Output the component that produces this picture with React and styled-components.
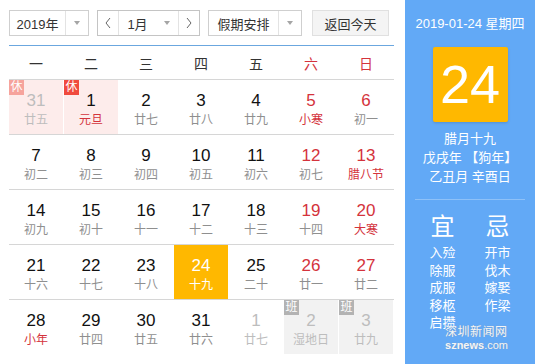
import React from "react"
import styled, { createGlobalStyle } from "styled-components"

const Global = createGlobalStyle`
  body {
    margin: 0;
    background: #fff;
    font-family: "Liberation Sans", Arial, "Noto Sans CJK SC", sans-serif;
  }
`

const Page = styled.div`
  display: flex;
  width: 535px;
  height: 364px;
  overflow: hidden;
`

const Left = styled.div`
  width: 385px;
  padding: 10px 0 0 9px;
`

const Toolbar = styled.div`
  display: flex;
  height: 26px;
  padding-bottom: 9px;
  border-bottom: 1px solid #6ba7df;
`

const Select = styled.div`
  display: flex;
  width: ${p => p.w}px;
  height: 26px;
  box-sizing: border-box;
  border: 1px solid #cfcfcf;
  margin-right: ${p => p.mr || 0}px;
  font-size: 13px;
  color: #333;
`

const SelText = styled.div`
  flex: 1;
  display: flex;
  align-items: center;
  justify-content: center;
`

const Caret = styled.div`
  width: 22px;
  display: flex;
  align-items: center;
  justify-content: center;
  border-left: ${p => (p.noline ? "none" : "1px solid #e3e3e3")};
  &::after {
    content: "";
    border-left: 3px solid transparent;
    border-right: 3px solid transparent;
    border-top: 4px solid #a5a5a5;
  }
`

const Arrow = styled.div`
  width: 20px;
  display: flex;
  align-items: center;
  justify-content: center;
  border-${p => (p.side === "l" ? "right" : "left")}: 1px solid #e3e3e3;
`

const Btn = styled.div`
  width: 77px;
  height: 26px;
  box-sizing: border-box;
  border: 1px solid #e0e0e0;
  background: #f4f4f4;
  font-size: 13px;
  color: #333;
  display: flex;
  align-items: center;
  justify-content: center;
`

const Week = styled.div`
  display: grid;
  grid-template-columns: repeat(7, 54px);
  column-gap: 1px;
  height: 33px;
  align-items: center;
  border-bottom: 1px solid #d6d6d6;
`

const WeekDay = styled.div`
  text-align: center;
  font-size: 14px;
  color: ${p => (p.red ? "#d4333c" : "#333")};
`

const Row = styled.div`
  display: grid;
  grid-template-columns: repeat(7, 54px);
  column-gap: 1px;
  height: 54px;
  border-top: ${p => (p.first ? "none" : "1px solid #d6d6d6")};
`

const bgs = { rest: "#fdeceb", work: "#f2f2f2", today: "#ffb800" }

const Cell = styled.div`
  position: relative;
  background: ${p => bgs[p.kind] || "transparent"};
  display: flex;
  flex-direction: column;
  align-items: center;
  padding-top: 11px;
  box-sizing: border-box;
`

const Num = styled.div`
  font-size: 17px;
  line-height: 20px;
  color: ${p => p.c};
`

const Sub = styled.div`
  font-size: 12px;
  line-height: 16px;
  margin-top: 1px;
  color: ${p => p.c};
`

const badgeColors = { rest: "#f04a3e", restFade: "#f6a39c", work: "#b3b3b3" }

const Badge = styled.span`
  position: absolute;
  left: 0;
  top: 0;
  width: 15px;
  height: 15px;
  line-height: 15px;
  text-align: center;
  font-size: 12px;
  color: #fff;
  background: ${p => badgeColors[p.kind]};
`

const Right = styled.div`
  position: relative;
  margin-left: 11px;
  width: 130px;
  height: 364px;
  background: #62a9f6;
  color: #fff;
  display: flex;
  flex-direction: column;
  align-items: center;
`

const DateLine = styled.div`
  margin-top: 16px;
  font-size: 13px;
  line-height: 16px;
`

const BigDay = styled.div`
  margin-top: 15px;
  width: 75px;
  height: 75px;
  border-radius: 2px;
  background: #ffb800;
  box-shadow: 0 1px 3px rgba(0, 0, 0, 0.15);
  font-size: 54px;
  line-height: 75px;
  text-align: center;
`

const Lunar = styled.div`
  margin-top: 7px;
  font-size: 13px;
  line-height: 19px;
  text-align: center;
`

const Divider = styled.div`
  margin-top: 13px;
  width: 110px;
  height: 1px;
  background: #8ec1f8;
`

const Advice = styled.div`
  display: grid;
  grid-template-columns: 55px 55px;
  margin-top: 13px;
`

const AdvCol = styled.div`
  display: flex;
  flex-direction: column;
  align-items: center;
`

const AdvHead = styled.div`
  font-size: 24px;
  line-height: 28px;
  margin-bottom: 3px;
`

const AdvItem = styled.div`
  font-size: 13px;
  line-height: 17.5px;
`

const Mark = styled.div`
  position: absolute;
  right: 27px;
  bottom: 13px;
  color: rgba(255, 255, 255, 0.92);
  text-shadow: 0 0 1px #8a9bb0;
  text-align: left;
`

const MarkCn = styled.div`
  font-family: "Liberation Serif", "Noto Sans CJK SC", serif;
  font-size: 12px;
  line-height: 13px;
  letter-spacing: 0.5px;
`

const MarkEn = styled.div`
  font-size: 11px;
  line-height: 12px;
  font-weight: bold;
  & span { font-weight: normal; }
`

const Chevron = ({ dir }) => (
  <svg width="8" height="12" viewBox="0 0 8 12">
    <polyline
      points={dir === "l" ? "6,1 2,6 6,11" : "2,1 6,6 2,11"}
      fill="none"
      stroke="#666"
      strokeWidth="1"
    />
  </svg>
)

const RED = "#d4333c"
const BLACK = "#111"
const GRAY = "#8f8f8f"
const FADE = "#bdbdbd"

// n, sub, flags: f=faded, r=red number, sr=red sub, badge, kind
const weeks = [
  [
    { n: 31, s: "廿五", f: 1, kind: "rest", badge: "restFade" },
    { n: 1, s: "元旦", sr: 1, kind: "rest", badge: "rest" },
    { n: 2, s: "廿七" },
    { n: 3, s: "廿八" },
    { n: 4, s: "廿九" },
    { n: 5, s: "小寒", r: 1, sr: 1 },
    { n: 6, s: "初一", r: 1 },
  ],
  [
    { n: 7, s: "初二" },
    { n: 8, s: "初三" },
    { n: 9, s: "初四" },
    { n: 10, s: "初五" },
    { n: 11, s: "初六" },
    { n: 12, s: "初七", r: 1 },
    { n: 13, s: "腊八节", r: 1, sr: 1 },
  ],
  [
    { n: 14, s: "初九" },
    { n: 15, s: "初十" },
    { n: 16, s: "十一" },
    { n: 17, s: "十二" },
    { n: 18, s: "十三" },
    { n: 19, s: "十四", r: 1 },
    { n: 20, s: "大寒", r: 1, sr: 1 },
  ],
  [
    { n: 21, s: "十六" },
    { n: 22, s: "十七" },
    { n: 23, s: "十八" },
    { n: 24, s: "十九", kind: "today" },
    { n: 25, s: "二十" },
    { n: 26, s: "廿一", r: 1 },
    { n: 27, s: "廿二", r: 1 },
  ],
  [
    { n: 28, s: "小年", sr: 1 },
    { n: 29, s: "廿四" },
    { n: 30, s: "廿五" },
    { n: 31, s: "廿六" },
    { n: 1, s: "廿七", f: 1 },
    { n: 2, s: "湿地日", f: 1, kind: "work", badge: "work" },
    { n: 3, s: "廿九", f: 1, kind: "work", badge: "work" },
  ],
]

const yi = ["入殓", "除服", "成服", "移柩", "启攒"]
const ji = ["开市", "伐木", "嫁娶", "作梁"]

function Day({ d }) {
  let nc = d.r ? RED : BLACK
  let sc = d.sr ? RED : GRAY
  if (d.f) {
    nc = FADE
    sc = FADE
  }
  if (d.kind === "today") {
    nc = "#fff"
    sc = "#fff"
  }
  return (
    <Cell kind={d.kind}>
      {d.badge && <Badge kind={d.badge}>{d.badge === "work" ? "班" : "休"}</Badge>}
      <Num c={nc}>{d.n}</Num>
      <Sub c={sc}>{d.s}</Sub>
    </Cell>
  )
}

export default function App() {
  return (
    <Page>
      <Global />
      <Left>
        <Toolbar>
          <Select w={80} mr={8}>
            <SelText>2019年</SelText>
            <Caret />
          </Select>
          <Select w={103} mr={8} style={{ borderColor: "#c4c4c4" }}>
            <Arrow side="l"><Chevron dir="l" /></Arrow>
            <SelText>1月</SelText>
            <Caret noline />
            <Arrow side="r"><Chevron dir="r" /></Arrow>
          </Select>
          <Select w={94} mr={10}>
            <SelText>假期安排</SelText>
            <Caret />
          </Select>
          <Btn>返回今天</Btn>
        </Toolbar>
        <Week>
          {["一", "二", "三", "四", "五", "六", "日"].map((w, i) => (
            <WeekDay key={w} red={i > 4}>{w}</WeekDay>
          ))}
        </Week>
        {weeks.map((wk, i) => (
          <Row key={i} first={i === 0}>
            {wk.map((d, j) => <Day key={j} d={d} />)}
          </Row>
        ))}
      </Left>
      <Right>
        <DateLine>2019-01-24 星期四</DateLine>
        <BigDay>24</BigDay>
        <Lunar>
          腊月十九<br />
          戊戌年 【狗年】<br />
          乙丑月 辛酉日
        </Lunar>
        <Divider />
        <Advice>
          <AdvCol>
            <AdvHead>宜</AdvHead>
            {yi.map(t => <AdvItem key={t}>{t}</AdvItem>)}
          </AdvCol>
          <AdvCol>
            <AdvHead>忌</AdvHead>
            {ji.map(t => <AdvItem key={t}>{t}</AdvItem>)}
          </AdvCol>
        </Advice>
        <Mark>
          <MarkCn>深圳新闻网</MarkCn>
          <MarkEn>sznews<span>.com</span></MarkEn>
        </Mark>
      </Right>
    </Page>
  )
}
